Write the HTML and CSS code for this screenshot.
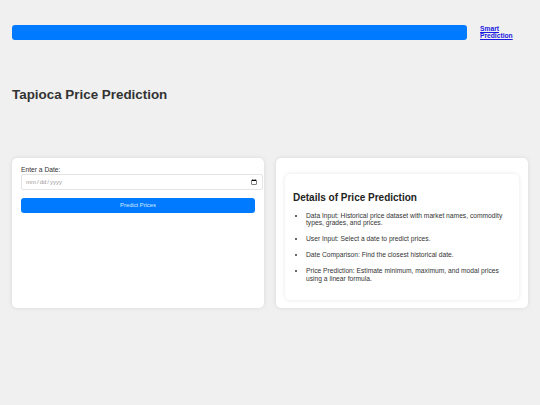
FILE: index.html
```html
<!DOCTYPE html>
<html>
<head>
<meta name="viewport" content="width=device-width, initial-scale=1">
<title>Tapioca Price Prediction</title>
<link rel="stylesheet" href="styles.css">
</head>
<body>

<div class="page">
    <!-- Top bar with link to the other predictor -->
    <div class="navbar">
        <div class="nav-strip"></div>
        <a href="#" class="nav-link">Smart Prediction</a>
    </div>

    <h1 class="title">Tapioca Price Prediction</h1>

    <div class="cards">
        <div class="card">
            <form id="predictForm">
                <label for="date">Enter a Date:</label>
                <input type="date" id="date" name="date">
                <button type="submit">Predict Prices</button>
            </form>
            <div id="result"></div>
        </div>

        <div class="card card-info">
            <div class="details">
                <h2>Details of Price Prediction</h2>
                <ul>
                    <li>Data Input: Historical price dataset with market names, commodity types, grades, and prices.</li>
                    <li>User Input: Select a date to predict prices.</li>
                    <li>Date Comparison: Find the closest historical date.</li>
                    <li>Price Prediction: Estimate minimum, maximum, and modal prices using a linear formula.</li>
                </ul>
            </div>
        </div>
    </div>
</div>

</body>
</html>
```

FILE: styles.css
```css
body {
    margin: 0;
    background-color: #f0f0f0;
    font-family: "Liberation Sans", Arial, Helvetica, sans-serif;
    font-size: 6.7px;
    color: #333;
}

.page {
    padding: 25px 12px 12px 12px;
}

/* Navigation bar */
.navbar {
    display: flex;
    align-items: flex-start;
    gap: 13px;
}

.nav-strip {
    flex: 1;
    height: 15px;
    background-color: #007bff;
    border-radius: 3px;
}

.nav-link {
    flex: 0 0 48px;
    font-size: 6.7px;
    font-weight: bold;
    color: #1a1ae0;
}

.title {
    margin: 47px 0 0 0;
    font-size: 13.4px;
    color: #333;
}

/* Two cards side by side */
.cards {
    display: grid;
    grid-template-columns: 1fr 1fr;
    gap: 12px;
    margin-top: 55.5px;
}

.card {
    background-color: #fff;
    border-radius: 5px;
    box-shadow: 0 0 4px rgba(0,0,0,0.1);
    height: 150px;
    padding: 8px 9px;
    box-sizing: border-box;
}

.card label {
    display: block;
    margin-bottom: 1px;
    color: #333;
}

.card input[type=date] {
    display: block;
    width: 100%;
    height: 14px;
    padding: 0 3px;
    margin: 0;
    font-size: 6px;
    color: #999;
    border: 1px solid #e4e4e4;
    border-radius: 2px;
    font-family: "Liberation Sans", Arial, sans-serif;
}

.card button {
    display: block;
    width: 100%;
    height: 15px;
    margin-top: 8px;
    background-color: #007bff;
    color: #dce9ff;
    font-size: 5.8px;
    border: none;
    border-radius: 3px;
    cursor: pointer;
    font-family: "Liberation Sans", Arial, sans-serif;
}

.card button:hover {
    opacity: 0.8;
}

/* Info card on the right */
.card-info {
    padding: 16px 9px 8px 9px;
}

.details {
    background-color: #fff;
    border-radius: 5px;
    box-shadow: 0 0 4px rgba(0,0,0,0.1);
    height: 100%;
    box-sizing: border-box;
    padding: 8px;
}

.details h2 {
    margin: 10px 0 0 0;
    font-size: 10px;
    color: #222;
}

.details ul {
    margin: 9px 0 0 0;
    padding-left: 13px;
}

.details li {
    line-height: 7.8px;
    margin-bottom: 8.2px;
    color: #333;
}
```
